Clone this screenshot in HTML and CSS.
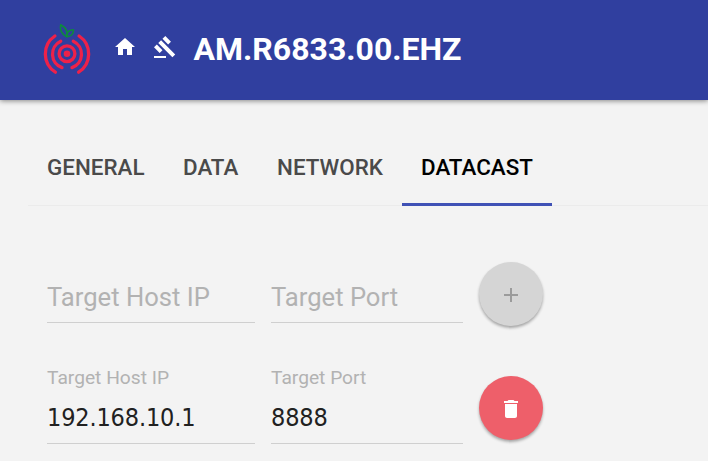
FILE: index.html
```
<!DOCTYPE html>
<html lang="en">
<head>
<meta charset="utf-8">
<title>AM.R6833.00.EHZ</title>
<link rel="stylesheet" href="styles.css">
</head>
<body>
<header class="toolbar">
  <svg class="logo" viewBox="0 0 48 56" fill="none" stroke-linecap="round">
    <g stroke="#ee2149" stroke-width="3.3">
      <circle cx="24" cy="31.7" r="7.9"/>
      <path d="M17.7 19.2a14.3 14.3 0 0 0 1.3 26.4M30.3 19.2a14.3 14.3 0 0 1-1.3 26.4"/>
      <path d="M11.9 14a21.6 21.6 0 0 0 .5 36.2M36.1 14a21.6 21.6 0 0 1-.5 36.2"/>
    </g>
    <circle cx="24" cy="31.7" r="3.3" fill="#ee2149"/>
    <g stroke="#0d8a3e" stroke-width="1.6" stroke-linejoin="round">
      <path d="M23.7 14.7C18.5 12.5 16.5 7.500 17.700 2.700C22 5 25.200 9 23.700 14.700Z"/>
      <path d="M23.700 14.700C23.300 10.500 26 7.800 30.500 7.700C30.600 12 28 14.700 23.700 14.700Z"/>
    </g>
  </svg>
  <svg class="icon home" viewBox="0 0 24 24"><path d="M10 20v-6h4v6h5v-8h3L12 3 2 12h3v8z"/></svg>
  <svg class="icon gavel" viewBox="0 0 24 24"><path d="M1 21h12v2H1zM5.245 8.070l2.830-2.827 14.140 14.142-2.828 2.828zM12.317 1l5.657 5.656-2.830 2.830-5.654-5.660zM3.825 9.485l5.657 5.657-2.828 2.828-5.657-5.657z"/></svg>
  <h1 class="title">AM.R6833.00.EHZ</h1>
</header>
<main class="content">
  <nav class="tabs">
    <a class="tab general">General</a>
    <a class="tab data">Data</a>
    <a class="tab network">Network</a>
    <a class="tab datacast active">Datacast</a>
  </nav>
  <section class="targets">
    <div class="row empty">
      <div class="field host"><span class="placeholder">Target Host IP</span></div>
      <div class="field port"><span class="placeholder">Target Port</span></div>
      <button class="fab add" aria-label="Add" disabled><svg class="icon" viewBox="0 0 24 24"><path d="M19 13h-6v6h-2v-6H5v-2h6V5h2v6h6v2z"/></svg></button>
    </div>
    <div class="row filled">
      <div class="field host"><span class="label">Target Host IP</span><span class="value">192.168.10.1</span></div>
      <div class="field port"><span class="label">Target Port</span><span class="value">8888</span></div>
      <button class="fab remove" aria-label="Delete"><svg class="icon" viewBox="0 0 24 24"><path d="M6 19c0 1.100.9 2 2 2h8c1.100 0 2-.9 2-2V7H6v12zM19 4h-3.500l-1-1h-5l-1 1H5v2h14V4z"/></svg></button>
    </div>
  </section>
</main>
</body>
</html>
```
FILE: styles.css
```
* { box-sizing: border-box; }
body {
  margin: 0;
  height: 461px;
  overflow: hidden;
  background: #f3f3f3;
  font-family: Roboto, "Liberation Sans", sans-serif;
}
.icon { display: block; width: 24px; height: 24px; fill: currentColor; flex: none; }
.toolbar {
  position: relative;
  display: flex;
  align-items: flex-start;
  height: 100px;
  padding: 22px 0 0 43px;
  background: #303f9f;
  color: #fff;
  box-shadow: 0 1px 5px rgba(0, 0, 0, .45);
}
.logo { width: 48px; height: 56px; flex: none; }
.home { margin: 13px 0 0 22px; }
.gavel { margin: 13px 0 0 16px; }
.title {
  margin: 7px 0 0 16.500px;
  font-size: 32px;
  line-height: 40px;
  font-weight: 700;
  white-space: nowrap;
}
.content { padding-left: 28px; }
.tabs {
  display: flex;
  height: 106px;
  padding-top: 29px;
  border-bottom: 1px solid #ebebeb;
}
.tab {
  height: 77px;
  padding: 0 19px;
  line-height: 77px;
  font-size: 22.400px;
  font-weight: 500;
  text-transform: uppercase;
  white-space: nowrap;
  color: #4a4a4a;
}
.general { width: 136px; }
.data { width: 94px; }
.network { width: 144px; }
.datacast { width: 150px; }
.active { color: #000; border-bottom: 3px solid #3f51b5; }
.targets { padding: 56px 0 0 19px; }
.row { display: flex; height: 64px; }
.filled { margin-top: 50px; }
.field {
  display: flex;
  flex-direction: column;
  margin-right: 16px;
  border-bottom: 1px solid #cfcfcf;
  white-space: nowrap;
}
.empty .field { height: 61px; }
.filled .field { height: 78px; margin-top: -10px; padding-top: 1px; }
.host { width: 208px; }
.port { width: 192px; }
.placeholder { padding-top: 20px; font-size: 25.600px; line-height: 30px; color: #b2b2b2; }
.label { font-size: 19.200px; line-height: 22px; color: #b2b2b2; }
.value {
  margin-top: 14px;
  font-family: "DejaVu Sans Condensed", "DejaVu Sans", sans-serif;
  font-stretch: condensed;
  font-size: 25px;
  line-height: 30px;
  letter-spacing: -.15px;
  color: #212121;
}
.fab {
  display: flex;
  align-items: center;
  justify-content: center;
  flex: none;
  width: 64px;
  height: 64px;
  padding: 2px 0 0;
  border: 0;
  border-radius: 50%;
  box-shadow: 0 2px 3px rgba(0, 0, 0, .32);
}
.add { background: #d5d5d5; color: #9b9b9b; }
.remove { background: #ee5f6a; color: #fff; }
```
